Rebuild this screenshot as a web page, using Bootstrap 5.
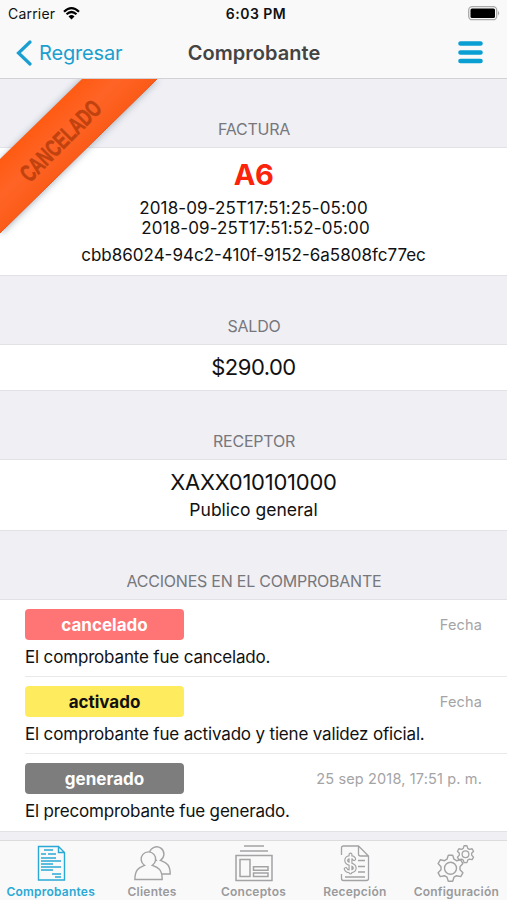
<!DOCTYPE html>
<html lang="es">
<head>
<meta charset="utf-8">
<meta name="viewport" content="width=device-width, initial-scale=1">
<title>Comprobante</title>
<link href="https://cdn.jsdelivr.net/npm/bootstrap@5.3.0/dist/css/bootstrap.min.css" rel="stylesheet">
<style>
body{font-family:Inter,"Liberation Sans",sans-serif;background:#efeff4;color:#111;height:900px;overflow:hidden;line-height:20px}
.app{height:900px}
.topbar{height:79px;background:#f9f9f9;border-bottom:1px solid #d2d2d5}
.status{height:27px;padding:0 7px 0 8px;font-size:14px}
.side{flex:1 1 0}
.carrier{letter-spacing:.2px}
.clock{font-weight:600;letter-spacing:.5px;padding-left:4px}
.navrow{height:51px;padding:0 24px 0 16px}
.back{color:#1a9fd0;font-size:20px;letter-spacing:-.15px;gap:7px}
.page-title{font-size:20px;font-weight:600;color:#444;letter-spacing:.05px;padding-left:9px}
.group-label{color:#77777c;font-size:16px;letter-spacing:-.23px;height:69px;padding:0 0 8px 1px;border-bottom:1px solid #e2e2e6}
.panel{background:#fff;border-bottom:1px solid #e2e2e6}
.invoice{height:128px;padding-top:10px}
.balance{height:46px;padding-bottom:1px}
.receiver{height:71px;padding-top:12px}
.folio{font-size:29px;line-height:33px;font-weight:700;color:#fb230b;letter-spacing:-.4px}
.stamp{font-size:17px;letter-spacing:.12px}
.first-stamp{margin-top:7px}
.uuid{letter-spacing:0;margin-top:7px}
.client{font-size:17.5px;letter-spacing:0;margin-top:8px}
.amount{font-size:22px;letter-spacing:-.5px}
.rfc{letter-spacing:-.25px}
.action{height:77px;margin-left:25px;padding:9px 25px 0 0;border-bottom:1px solid #e9e9ec}
.action:last-child{border-bottom:0}
.tag{width:159px;height:31px;border-radius:4px;font-size:17px;font-weight:700;letter-spacing:0}
.tag-red{background:#ff7475;color:#fff}
.tag-yellow{background:#ffeb5e;color:#111}
.tag-grey{background:#7d7d7d;color:#fff}
.when{color:#a4a4a6;font-size:14.5px;letter-spacing:.15px}
.note{font-size:17px;letter-spacing:-.17px;margin-top:7px}
.tabs{height:60px;background:#f9f9f9;border-top:1px solid #dcdcdf;color:#9a9a9c}
.tab{font-size:12px;font-weight:600;line-height:14px;padding-top:4px;letter-spacing:.22px;white-space:nowrap}
.tab svg{display:block;margin-bottom:2px;color:#a3a3a5}
.tab.active,.tab.active svg{color:#2aa9d6}
.ribbon{top:79px;left:0}
</style>
</head>
<body>
<div class="app d-flex flex-column position-relative">
  <header class="topbar flex-shrink-0">
    <div class="status d-flex align-items-center">
      <div class="side d-flex align-items-center gap-2"><span class="carrier">Carrier</span>
        <svg width="17" height="13" viewBox="0 0 17 13" fill="none" stroke="#000" stroke-width="2.2"><path d="M1 4.7Q8.500-2.300 16 4.700M3.500 7.300Q8.500 2.700 13.500 7.300"/><path d="M8.500 12.500 5.500 9.400Q8.500 6.800 11.500 9.400Z" fill="#000" stroke="none"/></svg>
      </div>
      <span class="clock">6:03 PM</span>
      <div class="side d-flex justify-content-end"><svg width="32" height="15" viewBox="0 0 32 15"><rect x=".7" y=".7" width="28" height="13" rx="3.500" fill="#f9f9f9" stroke="#aaa" stroke-width="1.300"/><rect x="2.500" y="2.500" width="24.500" height="9.500" rx="1.500"/><path d="M30 4.800Q32.300 7.200 30 9.600Z" fill="#aaa"/></svg></div>
    </div>
    <nav class="navrow d-flex align-items-center">
      <div class="side d-flex align-items-center back">
        <svg width="16" height="26" viewBox="0 0 16 26" fill="none" stroke="currentColor" stroke-width="3.200" stroke-linecap="round"><path d="M14 2 2.500 13 14 24"/></svg><span>Regresar</span>
      </div>
      <span class="page-title">Comprobante</span>
      <div class="side d-flex justify-content-end"><svg width="25" height="24" viewBox="0 0 25 24" stroke="#0a9fd3" stroke-width="4.600" stroke-linecap="round"><path d="M2.500 2.500h20M2.500 11.500h20M2.500 20h20"/></svg></div>
    </nav>
  </header>

  <main class="flex-grow-1 overflow-hidden">
    <div class="group-label d-flex align-items-end justify-content-center">FACTURA</div>
    <section class="panel invoice text-center">
      <div class="folio">A6</div>
      <div class="stamp first-stamp">2018-09-25T17:51:25-05:00</div>
      <div class="stamp ps-1">2018-09-25T17:51:52-05:00</div>
      <div class="stamp uuid">cbb86024-94c2-410f-9152-6a5808fc77ec</div>
    </section>
    <div class="group-label d-flex align-items-end justify-content-center">SALDO</div>
    <section class="panel balance amount d-flex align-items-center justify-content-center">$290.00</section>
    <div class="group-label d-flex align-items-end justify-content-center">RECEPTOR</div>
    <section class="panel receiver text-center">
      <div class="amount rfc">XAXX010101000</div>
      <div class="stamp client">Publico general</div>
    </section>
    <div class="group-label d-flex align-items-end justify-content-center">ACCIONES EN EL COMPROBANTE</div>
    <section class="panel">
      <div class="action"><div class="d-flex align-items-center justify-content-between"><span class="tag tag-red d-flex align-items-center justify-content-center">cancelado</span><span class="when">Fecha</span></div><div class="note">El comprobante fue cancelado.</div></div>
      <div class="action"><div class="d-flex align-items-center justify-content-between"><span class="tag tag-yellow d-flex align-items-center justify-content-center">activado</span><span class="when">Fecha</span></div><div class="note">El comprobante fue activado y tiene validez oficial.</div></div>
      <div class="action"><div class="d-flex align-items-center justify-content-between"><span class="tag tag-grey d-flex align-items-center justify-content-center">generado</span><span class="when">25 sep 2018, 17:51 p. m.</span></div><div class="note">El precomprobante fue generado.</div></div>
    </section>
  </main>

  <svg class="ribbon position-absolute" width="175" height="175" viewBox="0 0 175 175">
    <defs>
      <linearGradient id="band" gradientUnits="userSpaceOnUse" x1="40" y1="40" x2="78" y2="78"><stop offset="0" stop-color="#ff5a12"/><stop offset=".5" stop-color="#ff6426"/><stop offset="1" stop-color="#fb5b18"/></linearGradient>
      <filter id="soft" x="-20%" y="-20%" width="150%" height="150%"><feGaussianBlur stdDeviation="3.500"/></filter>
    </defs>
    <path d="M82 0H158L0 156V82Z" fill="#52677a" opacity=".5" filter="url(#soft)"/>
    <path d="M82 0H157L0 154V80Z" fill="url(#band)"/>
    <path d="M157 0 0 154" stroke="#e9551a" stroke-width="1"/>
    <g transform="translate(60.500 61.500) rotate(-45)" font-family="Liberation Sans, Arial, sans-serif" font-size="24" font-weight="700" text-anchor="middle">
      <text y="8.500" fill="#c0420f" stroke="#c0420f" stroke-width=".6" textLength="104" lengthAdjust="spacingAndGlyphs">CANCELADO</text>
    </g>
  </svg>

  <footer class="tabs row g-0 flex-shrink-0 flex-nowrap">
    <div class="col tab active d-flex flex-column align-items-center">
      <svg width="38" height="38" viewBox="0 0 38 38" fill="none" stroke="currentColor" stroke-width="1.400"><path d="M6.500 1.500h20l6 6v27.500h-26ZM26.500 1.500v6h6"/><path d="M12 5h9M9 9h5M16 9h8M9 13h15M9 16h20M9 19h12M9 22h20M9 25h12M20 29h9M23 32h6"/></svg>Comprobantes</div>
    <div class="col tab d-flex flex-column align-items-center">
      <svg width="38" height="38" viewBox="0 0 38 38" fill="none" stroke="currentColor" stroke-width="1.400"><path d="M1.900 34.500c0-10 4-12 9.600-14.200a7.300 7.300 0 1 1 7.800 0c6.500 2.200 9.900 4.700 9.900 14.200ZM16.500 7.500a7.300 7.300 0 1 1 11 7.800c6.500 2.300 9.700 5 9.700 13.700h-8.500M22 14.200l2 1.600"/></svg>Clientes</div>
    <div class="col tab d-flex flex-column align-items-center">
      <svg width="38" height="38" viewBox="0 0 38 38" fill="none" stroke="currentColor" stroke-width="1.500"><path d="M9 .9h20M5 5.900h28M1 10.500h36v25H1ZM5 14.500h10v17H5ZM18.500 21.800h14.500v3.500H18.500ZM18.500 28h14.500v3.500H18.500Z"/></svg>Conceptos</div>
    <div class="col tab d-flex flex-column align-items-center">
      <svg width="38" height="38" viewBox="0 0 38 38" fill="none" stroke="currentColor" stroke-width="1.300"><path d="M5.500 10V3Q5.500 1 7.500 1h15L32.500 11v22.500q0 2-2 2H7.500q-2 0-2-2V29M22.500 1v8q0 2 2 2h8M22 15.500h7M22 21.500h7M22 27h7M9 32h20"/><g stroke-linecap="round"><path d="M18.200 14c-1.500-3-8-2.500-8 1.500 0 5 8.500 2.500 8.500 7.500 0 4-7.500 4.500-9 1M14.500 9.500v18" stroke-width="4"/><path d="M18.200 14c-1.500-3-8-2.500-8 1.500 0 5 8.500 2.500 8.500 7.500 0 4-7.500 4.500-9 1M14.500 9.500v18" stroke="#f9f9f9" stroke-width="1.700"/></g></svg>Recepción</div>
    <div class="col tab d-flex flex-column align-items-center">
      <svg width="38" height="38" viewBox="0 0 38 38" fill="none" stroke="currentColor" stroke-linejoin="round">
        <defs><path id="cog" d="M-3.500-9-2.200-13H2.200L3.500-9 6-7.500 10.200-8.400 12.400-4.600 9.500-1.500V1.500L12.400 4.600 10.200 8.400 6 7.500 3.500 9 2.200 13H-2.200L-3.500 9-6 7.500-10.200 8.400-12.400 4.600-9.500 1.500V-1.500L-12.400-4.600-10.200-8.400-6-7.500Z"/></defs>
        <g transform="translate(13.500 23.200)" stroke-width="1.400"><use href="#cog"/><circle r="6"/></g>
        <g transform="translate(28.500 9.200) scale(.65)" stroke-width="2"><use href="#cog"/><circle r="5.200"/></g>
      </svg>Configuración</div>
  </footer>
</div>
<script src="https://cdn.jsdelivr.net/npm/bootstrap@5.3.0/dist/js/bootstrap.bundle.min.js"></script>
</body>
</html>
